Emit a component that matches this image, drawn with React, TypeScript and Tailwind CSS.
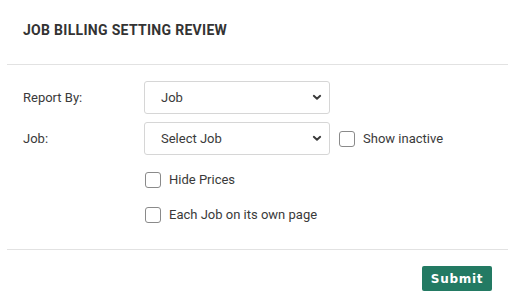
import React from "react";

function Chevron() {
  return (
    <svg width="10" height="7" viewBox="0 0 10 7" className="shrink-0">
      <path d="M1.8 1.8 L5 4.8 L8.2 1.8" fill="none" stroke="#3a3a3a" strokeWidth="1.9" strokeLinecap="round" strokeLinejoin="round" />
    </svg>
  );
}

function Select({ value }: { value: string }) {
  return (
    <div className="w-[186px] h-[33px] border border-[#d6d6d6] rounded-[3px] flex items-center justify-between pl-4 pr-[7px] text-[13px] text-[#3a3a3a]">
      <span>{value}</span>
      <Chevron />
    </div>
  );
}

function Check({ label }: { label: string }) {
  return (
    <div className="flex items-center gap-2 text-[13px] text-[#3a3a3a]">
      <span className="w-[16px] h-[16px] border border-[#8a8a8a] rounded-[3px] bg-white shrink-0" />
      <span>{label}</span>
    </div>
  );
}

export default function App() {
  return (
    <div className="w-[508px] h-[308px] bg-white font-['Roboto',sans-serif] text-[#333]">
      <div className="ml-[7px] w-[501px]">
        <div className="h-[65px] border-b border-[#e2e2e2] flex items-center pl-4 pb-[3px]">
          <h1 className="text-[14px] font-bold tracking-[0.3px] text-[#333]">JOB BILLING SETTING REVIEW</h1>
        </div>
        <div className="pt-4 pb-[24px] border-b border-[#e2e2e2] pl-4">
          <div className="flex items-center">
            <div className="w-[121px] text-[13px] text-[#3a3a3a]">Report By:</div>
            <Select value="Job" />
          </div>
          <div className="flex items-center mt-2">
            <div className="w-[121px] text-[13px] text-[#3a3a3a]">Job:</div>
            <Select value="Select Job" />
            <div className="ml-[9px]">
              <Check label="Show inactive" />
            </div>
          </div>
          <div className="ml-[122px] mt-[15px] h-[20px] flex items-center">
            <Check label="Hide Prices" />
          </div>
          <div className="ml-[122px] mt-[15px] h-[20px] flex items-center">
            <Check label="Each Job on its own page" />
          </div>
        </div>
        <div className="flex justify-end pr-4 pt-4">
          <button className="w-[70px] h-[25px] bg-[#237a63] rounded-[2px] text-white text-[12px] font-bold font-['DejaVu_Sans',sans-serif] tracking-[0.7px] flex items-center justify-center">
            Submit
          </button>
        </div>
      </div>
    </div>
  );
}
